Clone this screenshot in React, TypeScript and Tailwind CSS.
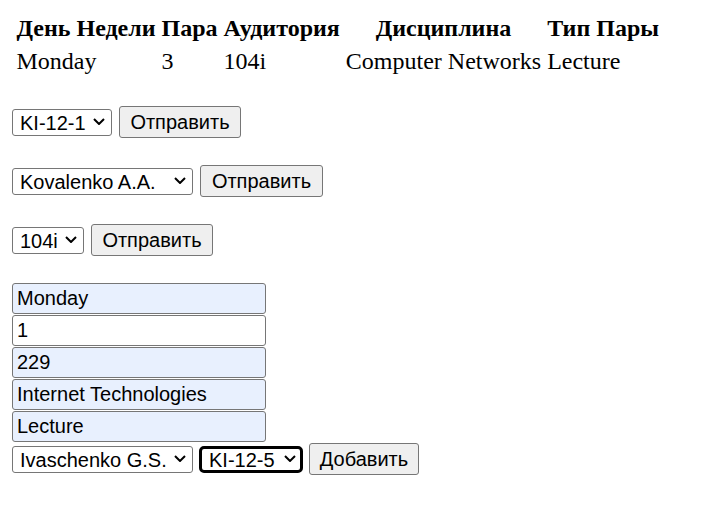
import React from 'react'
import clsx from 'clsx'

type SelectProps = { label: string; width: string; focused?: boolean }

function Select({ label, width, focused }: SelectProps) {
  return (
    <div className={clsx('relative h-[27px] shrink-0', width)}>
      <select
        defaultValue={label}
        className={clsx(
          "appearance-none w-full h-full bg-white pl-[7px] text-[20px] leading-none font-['Liberation_Sans'] text-black outline-none",
          focused ? 'border-[3px] border-black rounded-[5px] pl-[5px]' : 'border border-[#767676] rounded-[3px]'
        )}
      >
        <option>{label}</option>
      </select>
      <svg
        className="pointer-events-none absolute right-[7px] top-[9px]"
        width="12"
        height="7"
        viewBox="0 0 12 7"
      >
        <path d="M1 1 L6 6 L11 1" stroke="black" strokeWidth="2" fill="none" />
      </svg>
    </div>
  )
}

function Btn({ text, width }: { text: string; width: string }) {
  return (
    <button
      type="button"
      className={clsx(
        "h-[32px] shrink-0 border border-[#767676] rounded-[3px] bg-[#efefef] text-[20px] leading-none font-['Liberation_Sans'] text-black",
        width
      )}
    >
      {text}
    </button>
  )
}

function Field({ value, filled = true }: { value: string; filled?: boolean }) {
  return (
    <input
      defaultValue={value}
      className={clsx(
        "w-[254px] h-[31px] border border-[#767676] rounded-[3px] px-[4px] text-[20px] font-['Liberation_Sans'] text-black outline-none",
        filled ? 'bg-[#e8f0fe]' : 'bg-white'
      )}
    />
  )
}

const headers = ['День Недели', 'Пара', 'Аудитория', 'Дисциплина', 'Тип Пары']
const rows = [['Monday', '3', '104i', 'Computer Networks', 'Lecture']]

export default function App() {
  return (
    <div className="min-h-screen bg-white px-3 pt-[10px] pb-3 font-['Liberation_Serif'] text-[24px] leading-[27.6px] text-black">
      <table className="border-separate border-spacing-[3px]">
        <thead>
          <tr>
            {headers.map((h) => (
              <th key={h} className="p-[1.5px] text-center font-bold">{h}</th>
            ))}
          </tr>
        </thead>
        <tbody>
          {rows.map((r, i) => (
            <tr key={i}>
              {r.map((c, j) => (
                <td key={j} className="p-[1.5px] text-left">{c}</td>
              ))}
            </tr>
          ))}
        </tbody>
      </table>

      <form className="mt-[26px] flex items-center gap-[7px]">
        <Select label="KI-12-1" width="w-[100px]" />
        <Btn text="Отправить" width="w-[122px]" />
      </form>

      <form className="mt-[27px] flex items-center gap-[7px]">
        <Select label="Kovalenko A.A." width="w-[181px]" />
        <Btn text="Отправить" width="w-[123px]" />
      </form>

      <form className="mt-[27px] flex items-center gap-[7px]">
        <Select label="104i" width="w-[72px]" />
        <Btn text="Отправить" width="w-[122px]" />
      </form>

      <form className="mt-[27px] flex flex-col items-start gap-[1px]">
        <Field value="Monday" />
        <Field value="1" filled={false} />
        <Field value="229" />
        <Field value="Internet Technologies" />
        <Field value="Lecture" />
        <div className="flex items-center">
          <Select label="Ivaschenko G.S." width="w-[181px]" />
          <div className="ml-[6px]">
            <Select label="KI-12-5" width="w-[104px]" focused />
          </div>
          <div className="ml-[6px]">
            <Btn text="Добавить" width="w-[110px]" />
          </div>
        </div>
      </form>
    </div>
  )
}
